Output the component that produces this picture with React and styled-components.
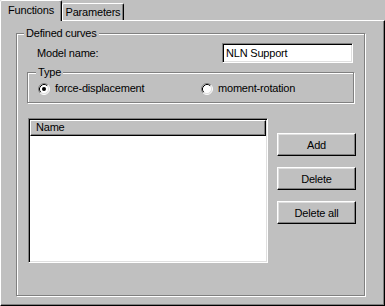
import React from 'react';
import styled, { createGlobalStyle } from 'styled-components';

const GlobalStyle = createGlobalStyle`
  html, body {
    margin: 0;
    background: #c0c0c0;
  }
  body {
    font-family: "Liberation Sans", Arial, sans-serif;
    font-size: 11px;
    letter-spacing: -0.2px;
    color: #000;
  }
`;

const Window = styled.div`
  width: 385px;
  height: 306px;
  display: flex;
  flex-direction: column;
  background: #c0c0c0;
`;

const TabStrip = styled.div`
  display: flex;
  align-items: flex-end;
  height: 20px;
  position: relative;
  z-index: 1;
`;

const Tab = styled.div`
  box-sizing: border-box;
  background: #c0c0c0;
  border-top: 1px solid #fff;
  border-left: 1px solid #fff;
  border-right: 1px solid #000;
  box-shadow: inset -1px 0 #808080;
  border-radius: 2px 2px 0 0;
  line-height: 13px;
  height: ${p => (p.$active ? '21px' : '17px')};
  margin-bottom: ${p => (p.$active ? '-1px' : '0')};
  padding-top: ${p => (p.$active ? '3px' : '2px')};
  width: ${p => p.$width}px;
  text-align: center;
  white-space: nowrap;
`;

const Page = styled.div`
  flex: 1;
  display: flex;
  flex-direction: column;
  border-top: 1px solid #fff;
  border-left: 1px solid #fff;
  border-right: 1px solid #000;
  border-bottom: 1px solid #000;
  box-shadow: inset -1px -1px #808080;
  padding: 6px 19px 9px 15px;
`;

const Group = styled.fieldset`
  margin: 0;
  min-width: 0;
  border: 1px solid #808080;
  box-shadow: inset 1px 1px #fff, 1px 1px #fff;
  padding: ${p => p.$pad};
  display: flex;
  flex-direction: column;
  flex: ${p => (p.$grow ? 1 : 'none')};
  margin-top: ${p => p.$top || 0}px;
  margin-right: ${p => p.$right || 0}px;
`;

const Legend = styled.legend`
  padding: 0 2px;
  line-height: 13px;
  background: #c0c0c0;
  margin-left: ${p => p.$shift}px;
`;

const FieldRow = styled.div`
  display: flex;
  align-items: center;
  justify-content: space-between;
  margin-top: 3px;
  margin-right: 3px;
  padding-left: 10px;
  height: 20px;
`;

const TextBox = styled.div`
  box-sizing: border-box;
  width: 131px;
  height: 20px;
  background: #fff;
  border: 1px solid;
  border-color: #808080 #fff #fff #808080;
  box-shadow: inset 1px 1px #000, inset -1px -1px #dfdfdf;
  padding: 2px 0 0 3px;
  line-height: 14px;
`;

const RadioRow = styled.div`
  display: grid;
  grid-template-columns: 163px 1fr;
  margin-top: 3px;
  height: 13px;
`;

const RadioItem = styled.label`
  display: flex;
  align-items: center;
  gap: 5px;
  line-height: 13px;
`;

const ListArea = styled.div`
  display: flex;
  margin-top: 15px;
  margin-left: 1px;
`;

const ListBox = styled.div`
  box-sizing: border-box;
  width: 240px;
  height: 145px;
  background: #fff;
  border: 1px solid;
  border-color: #808080 #fff #fff #808080;
  box-shadow: inset 1px 1px #000, inset -1px -1px #dfdfdf;
  padding: 1px;
`;

const ListHeader = styled.div`
  box-sizing: border-box;
  height: 16px;
  background: #c0c0c0;
  border-top: 1px solid #fff;
  border-left: 1px solid #fff;
  border-right: 1px solid #000;
  border-bottom: 1px solid #000;
  box-shadow: inset -1px -1px #808080;
  padding-left: 5px;
  line-height: 13px;
`;

const ButtonColumn = styled.div`
  display: flex;
  flex-direction: column;
  gap: 11px;
  margin-left: 9px;
  padding-top: 15px;
`;

const Button = styled.button`
  box-sizing: border-box;
  width: 79px;
  height: 23px;
  margin: 0;
  padding: 0;
  background: #c0c0c0;
  border: 1px solid;
  border-color: #fff #000 #000 #fff;
  box-shadow: inset -1px -1px #808080, inset 1px 1px #dfdfdf;
  font: inherit;
  letter-spacing: inherit;
  color: #000;
`;

function Radio({ checked }) {
  return (
    <svg width="12" height="12" viewBox="0 0 12 12">
      <circle cx="6" cy="6" r="5" fill="#fff" />
      <path d="M2.1 9.9 A5.5 5.5 0 0 1 9.9 2.1" fill="none" stroke="#808080" strokeWidth="1" />
      <path d="M9.9 2.1 A5.5 5.5 0 0 1 2.1 9.9" fill="none" stroke="#fff" strokeWidth="1" />
      <path d="M2.82 9.18 A4.5 4.5 0 0 1 9.18 2.82" fill="none" stroke="#000" strokeWidth="1" />
      <path d="M9.18 2.82 A4.5 4.5 0 0 1 2.82 9.18" fill="none" stroke="#dfdfdf" strokeWidth="1" />
      {checked && <circle cx="6" cy="6" r="2" fill="#000" />}
    </svg>
  );
}

export default function App() {
  return (
    <>
      <GlobalStyle />
      <Window>
        <TabStrip>
          <Tab $active $width={62}>Functions</Tab>
          <Tab $width={62}>Parameters</Tab>
        </TabStrip>
        <Page>
          <Group $grow $pad="0 8px 0 10px">
            <Legend $shift={-3}>Defined curves</Legend>
            <FieldRow>
              <span>Model name:</span>
              <TextBox>NLN Support</TextBox>
            </FieldRow>
            <Group $top={3} $right={2} $pad="0 10px 7px 10px">
              <Legend $shift={-2}>Type</Legend>
              <RadioRow>
                <RadioItem>
                  <Radio checked />
                  force-displacement
                </RadioItem>
                <RadioItem>
                  <Radio />
                  moment-rotation
                </RadioItem>
              </RadioRow>
            </Group>
            <ListArea>
              <ListBox>
                <ListHeader>Name</ListHeader>
              </ListBox>
              <ButtonColumn>
                <Button>Add</Button>
                <Button>Delete</Button>
                <Button>Delete all</Button>
              </ButtonColumn>
            </ListArea>
          </Group>
        </Page>
      </Window>
    </>
  );
}
